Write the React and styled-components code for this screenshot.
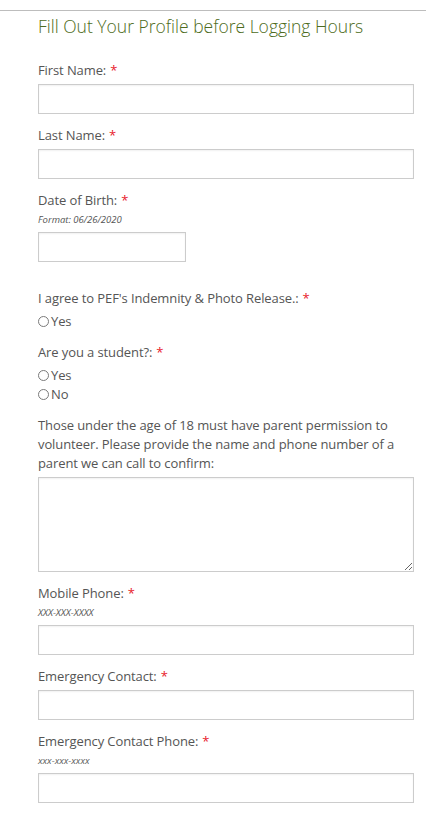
import React from "react";
import styled, { createGlobalStyle } from "styled-components";

const GlobalStyle = createGlobalStyle`
  html, body { margin: 0; padding: 0; background: #fff; }
  body { font-family: "Open Sans", "Liberation Sans", sans-serif; color: #555; }
  * { box-sizing: border-box; }
`;

const Page = styled.div`
  margin-top: 10px;
  border-top: 1px solid #bdbdbd;
  padding: 3px 12px 20px 38px;
`;

const Heading = styled.h2`
  margin: 0 0 23px;
  font-size: 17.5px;
  font-weight: 300;
  line-height: 24px;
  color: #4d6b20;
`;

const Form = styled.form`
  display: flex;
  flex-direction: column;
  width: 376px;
  letter-spacing: -0.1px;
`;

const Field = styled.div`
  display: flex;
  flex-direction: column;
  margin-bottom: ${(p) => p.$gap || 12}px;
`;

const Label = styled.label`
  font-size: 13px;
  line-height: 19px;
  color: #555;
  margin-bottom: 4px;
`;

const Req = styled.span`
  color: #e8202a;
  margin-left: 4px;
`;

const Hint = styled.div`
  font-size: 9.5px;
  font-style: italic;
  line-height: 14px;
  color: #555;
  margin: -1px 0 5px;
  letter-spacing: 0;
`;

const TextInput = styled.input`
  display: block;
  width: ${(p) => p.$w || "100%"};
  height: 30px;
  border: 1px solid #cccccc;
  box-shadow: inset 0 1px 2px rgba(0, 0, 0, 0.06);
  background: #fff;
  padding: 4px 6px;
  font: inherit;
  font-size: 13px;
  outline: none;
`;

const TextArea = styled.textarea`
  display: block;
  width: 100%;
  height: 95px;
  border: 1px solid #cccccc;
  box-shadow: inset 0 1px 2px rgba(0, 0, 0, 0.06);
  padding: 4px 6px;
  font: inherit;
  font-size: 13px;
  outline: none;
`;

const Options = styled.div`
  display: flex;
  flex-direction: column;
`;

const Option = styled.label`
  display: flex;
  align-items: center;
  font-size: 13px;
  line-height: 19px;
  color: #555;
`;

const Radio = styled.input.attrs({ type: "radio" })`
  appearance: none;
  -webkit-appearance: none;
  width: 11px;
  height: 11px;
  margin: 0 2px 0 0;
  border: 1px solid #7a7a7a;
  border-radius: 50%;
  background: #fff;
`;

const Paragraph = styled.p`
  margin: 0 0 4px;
  font-size: 13px;
  line-height: 19px;
  color: #555;
`;

const Required = ({ children }) => (
  <>
    {children}
    <Req>*</Req>
  </>
);

export default function App() {
  return (
    <>
      <GlobalStyle />
      <Page>
        <Heading>Fill Out Your Profile before Logging Hours</Heading>
        <Form onSubmit={(e) => e.preventDefault()}>
          <Field>
            <Label><Required>First Name:</Required></Label>
            <TextInput type="text" />
          </Field>
          <Field>
            <Label><Required>Last Name:</Required></Label>
            <TextInput type="text" />
          </Field>
          <Field $gap={27}>
            <Label><Required>Date of Birth:</Required></Label>
            <Hint>Format: 06/26/2020</Hint>
            <TextInput type="text" $w="148px" />
          </Field>
          <Field>
            <Label><Required>I agree to PEF's Indemnity &amp; Photo Release.:</Required></Label>
            <Options>
              <Option><Radio name="agree" />Yes</Option>
            </Options>
          </Field>
          <Field>
            <Label><Required>Are you a student?:</Required></Label>
            <Options>
              <Option><Radio name="student" />Yes</Option>
              <Option><Radio name="student" />No</Option>
            </Options>
          </Field>
          <Field>
            <Paragraph>
              Those under the age of 18 must have parent permission to volunteer. Please provide the name and phone number of a parent we can call to confirm:
            </Paragraph>
            <TextArea />
          </Field>
          <Field>
            <Label><Required>Mobile Phone:</Required></Label>
            <Hint>XXX-XXX-XXXX</Hint>
            <TextInput type="text" />
          </Field>
          <Field>
            <Label><Required>Emergency Contact:</Required></Label>
            <TextInput type="text" />
          </Field>
          <Field>
            <Label><Required>Emergency Contact Phone:</Required></Label>
            <Hint>xxx-xxx-xxxx</Hint>
            <TextInput type="text" />
          </Field>
        </Form>
      </Page>
    </>
  );
}
